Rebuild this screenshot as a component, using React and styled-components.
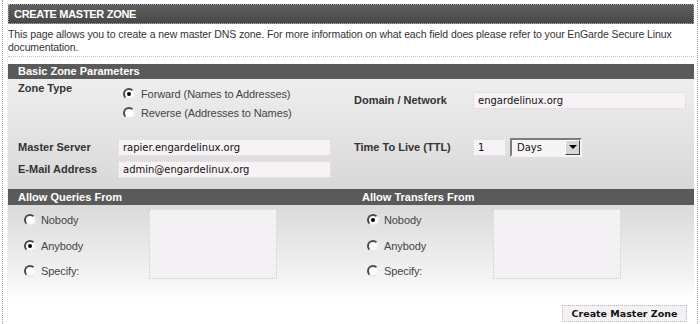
import React from 'react';
import styled, { createGlobalStyle, css } from 'styled-components';

const GlobalStyle = createGlobalStyle`
  html, body {
    margin: 0;
    padding: 0;
    background: #fff;
  }
  body {
    font-family: "Liberation Sans", Arial, sans-serif;
    font-size: 11px;
    color: #333;
  }
`;

const Page = styled.div`
  margin-left: 2px;
  width: 696px;
  height: 324px;
  box-sizing: border-box;
  padding: 4px 3px 0 5px;
  border-left: 1px dotted #9a9a9a;
  border-right: 1px dotted #9a9a9a;
  overflow: hidden;
`;

const Header = styled.h1`
  margin: 0;
  height: 20px;
  box-sizing: border-box;
  border: 1px dotted #a0a0a0;
  background: linear-gradient(#606060, #474747);
  color: #fff;
  font-size: 11px;
  font-weight: bold;
  letter-spacing: -0.3px;
  line-height: 18px;
  padding-left: 5px;
`;

const Intro = styled.p`
  margin: 4px 0 0;
  padding-bottom: 2px;
  font-size: 10.5px;
  letter-spacing: -0.1px;
  line-height: 13px;
  color: #333;
  border-bottom: 1px dotted #c4c4c4;
`;

const Bar = styled.div`
  display: grid;
  grid-template-columns: ${p => p.$split ? '344px 1fr' : '1fr'};
  margin-top: ${p => p.$top || 0}px;
  height: ${p => p.$h || 15}px;
  line-height: ${p => p.$h || 15}px;
  background: #5a5a5a;
  color: #fff;
  font-weight: bold;
`;

const BarCell = styled.div`
  padding-left: 10px;
`;

const BasicBody = styled.div`
  display: grid;
  grid-template-columns: 100px 236px 119px 1fr;
  grid-template-rows: 36px 18px 22px 22px;
  padding: 3px 0 9px 10px;
  background: linear-gradient(#eeeeee, #d8d8d8);
`;

const Label = styled.div`
  grid-row: ${p => p.$row};
  grid-column: ${p => p.$col};
  align-self: ${p => p.$top ? 'start' : 'center'};
  line-height: 13px;
  font-weight: bold;
  color: #333;
`;

const Cell = styled.div`
  grid-row: ${p => p.$row};
  grid-column: ${p => p.$col};
  align-self: ${p => p.$top ? 'start' : 'center'};
  display: flex;
  align-items: center;
`;

const RadioGroup = styled.div`
  grid-row: 1;
  grid-column: 2;
  align-self: start;
  padding: 2px 0 0 5px;
`;

const RadioLine = styled.label`
  display: flex;
  align-items: center;
  gap: ${p => p.$gap || 6}px;
  height: ${p => p.$h || 19}px;
  color: #444;
  letter-spacing: -0.1px;
`;

const RadioDot = styled.span`
  position: relative;
  flex: none;
  width: 12px;
  height: 12px;
  box-sizing: border-box;
  border-radius: 50%;
  background: #fff;
  border: 2px solid;
  border-color: #4a4a4a #f2f2f2 #e8e8e8 #4a4a4a;
  ${p => p.$checked && css`
    &::after {
      content: '';
      position: absolute;
      left: 2px;
      top: 2px;
      width: 4px;
      height: 4px;
      border-radius: 50%;
      background: #000;
    }
  `}
`;

const TextBox = styled.div`
  width: ${p => p.$w || 213}px;
  height: 17px;
  box-sizing: border-box;
  border: 1px dotted #cfcfcf;
  background: #f6f2f5;
  padding: 0 4px;
  font-family: "DejaVu Sans", Verdana, sans-serif;
  font-size: 10px;
  line-height: 15px;
  color: #111;
`;

const Select = styled.div`
  display: flex;
  align-items: center;
  margin-left: 4px;
  width: 72px;
  height: 19px;
  box-sizing: border-box;
  border: 2px solid;
  border-color: #7c7c7c #f4f4f4 #f4f4f4 #7c7c7c;
  background: #f6f3f6;
  padding-left: 5px;
  font-family: "DejaVu Sans", Verdana, sans-serif;
  font-size: 10px;
  color: #111;
`;

const SelectButton = styled.span`
  margin-left: auto;
  width: 15px;
  height: 15px;
  box-sizing: border-box;
  display: flex;
  align-items: center;
  justify-content: center;
  background: #d6d6d6;
  border: 1px solid;
  border-color: #fff #404040 #404040 #fff;

  &::before {
    content: '';
    border-left: 4px solid transparent;
    border-right: 4px solid transparent;
    border-top: 4px solid #000;
  }
`;

const LowerBody = styled.div`
  background: linear-gradient(#dadada 0, #f4f4f4 75px, #ffffff 95px);
  height: 118px;
`;

const AccessRow = styled.div`
  display: grid;
  grid-template-columns: 344px 1fr;
`;

const AccessCol = styled.div`
  display: flex;
  align-items: flex-start;
  padding: 4px 0 0 ${p => p.$indent}px;
`;

const RadioList = styled.div`
  width: ${p => p.$w}px;
  margin-top: -1.5px;
`;

const ListBox = styled.div`
  width: 128px;
  height: 70px;
  box-sizing: border-box;
  border: 1px dotted #cccccc;
  background: #f4f1f4;
`;

const Actions = styled.div`
  display: flex;
  justify-content: flex-end;
  padding: 21px 7px 0 0;
`;

const Button = styled.button`
  width: 125px;
  height: 17px;
  box-sizing: border-box;
  padding: 0;
  border: 1px dotted #b8b8b8;
  background: #f4f1f4;
  font-family: "DejaVu Sans", Verdana, sans-serif;
  font-size: 9.5px;
  font-weight: bold;
  color: #111;
`;

const Radio = ({ checked, children, h, gap }) => (
  <RadioLine $h={h} $gap={gap}>
    <RadioDot $checked={checked} />
    {children}
  </RadioLine>
);

const AccessOptions = ({ selected, indent, listWidth }) => (
  <AccessCol $indent={indent}>
    <RadioList $w={listWidth}>
      {['Nobody', 'Anybody', 'Specify:'].map(o => (
        <Radio key={o} checked={o === selected} h={25.5} gap={5}>{o}</Radio>
      ))}
    </RadioList>
    <ListBox />
  </AccessCol>
);

export default function App() {
  return (
    <>
      <GlobalStyle />
      <Page>
        <Header>CREATE MASTER ZONE</Header>
        <Intro>
          This page allows you to create a new master DNS zone. For more information on what each field does please refer to your EnGarde Secure Linux documentation.
        </Intro>

        <Bar $top={7}>
          <BarCell>Basic Zone Parameters</BarCell>
        </Bar>
        <BasicBody>
          <Label $row={1} $col={1} $top>Zone Type</Label>
          <RadioGroup>
            <Radio checked>Forward (Names to Addresses)</Radio>
            <Radio>Reverse (Addresses to Names)</Radio>
          </RadioGroup>
          <Label $row={1} $col={3}>Domain / Network</Label>
          <Cell $row={1} $col={4}><TextBox>engardelinux.org</TextBox></Cell>

          <Label $row={3} $col={1}>Master Server</Label>
          <Cell $row={3} $col={2}><TextBox>rapier.engardelinux.org</TextBox></Cell>
          <Label $row={3} $col={3}>Time To Live (TTL)</Label>
          <Cell $row={3} $col={4}>
            <TextBox $w={33}>1</TextBox>
            <Select>Days<SelectButton /></Select>
          </Cell>

          <Label $row={4} $col={1}>E-Mail Address</Label>
          <Cell $row={4} $col={2}><TextBox>admin@engardelinux.org</TextBox></Cell>
        </BasicBody>

        <Bar $split $h={16}>
          <BarCell>Allow Queries From</BarCell>
          <BarCell>Allow Transfers From</BarCell>
        </Bar>
        <LowerBody>
          <AccessRow>
            <AccessOptions selected="Anybody" indent={16} listWidth={125} />
            <AccessOptions selected="Nobody" indent={15} listWidth={126} />
          </AccessRow>
          <Actions>
            <Button>Create Master Zone</Button>
          </Actions>
        </LowerBody>
      </Page>
    </>
  );
}
